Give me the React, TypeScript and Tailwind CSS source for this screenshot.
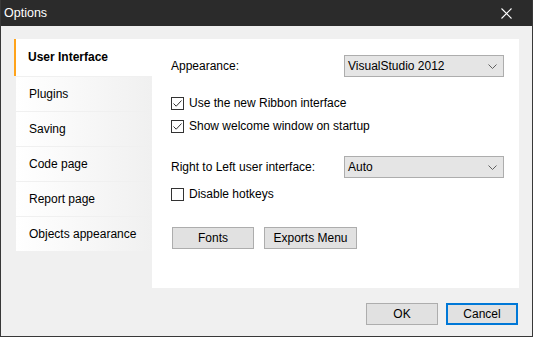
const navItems = ['Plugins', 'Saving', 'Code page', 'Report page', 'Objects appearance'];

function Check({ checked }: { checked: boolean }) {
	return (
		<span className="flex h-[13px] w-[13px] items-center justify-center border border-[#333333] bg-white">
			{checked && (
				<svg width="11" height="11" viewBox="0 0 11 11">
					<path d="M1.5 5.5 L4.2 8.2 L9.5 2.5" fill="none" stroke="#333333" strokeWidth="1" />
				</svg>
			)}
		</span>
	);
}

function Select({ value }: { value: string }) {
	return (
		<div className="flex h-[22px] w-[160px] items-center justify-between border border-[#adadad] bg-[#e5e5e5] pl-[3px] pr-[6px]">
			<span>{value}</span>
			<svg width="9" height="5" viewBox="0 0 9 5">
				<path d="M0.5 0.5 L4.5 4.5 L8.5 0.5" fill="none" stroke="#606060" strokeWidth="1" />
			</svg>
		</div>
	);
}

function Btn({ label, w, primary }: { label: string; w: string; primary?: boolean }) {
	return (
		<button
			type="button"
			className={`flex h-[22px] ${w} items-center justify-center bg-[#e1e1e1] ${
				primary ? 'border-2 border-[#0078d7]' : 'border border-[#adadad]'
			}`}
		>
			{label}
		</button>
	);
}

export default function App() {
	return (
		<div
			className="flex h-[337px] w-[533px] flex-col border border-t-0 border-[#383838] bg-[#f0f0f0] text-[12px] leading-[15px] text-black"
			style={{ fontFamily: '"Liberation Sans", Arial, sans-serif' }}
		>
			<div className="flex h-[26px] items-center justify-between bg-[#2b2b2b] pl-[3px] pr-[20px] text-white">
				<span className="text-[12.5px]">Options</span>
				<svg width="11" height="11" viewBox="0 0 11 11">
					<path d="M0.5 0.5 L10.5 10.5 M10.5 0.5 L0.5 10.5" stroke="white" strokeWidth="1.1" />
				</svg>
			</div>
			<div className="flex pl-[13px] pt-[13px]">
				<div className="flex w-[138px] flex-col gap-[1px]">
					<div className="flex h-[37px] items-center border-l-[2px] border-[#ffa31a] bg-white pl-[12px] font-bold">
						User Interface
					</div>
					{navItems.map((item) => (
						<div
							key={item}
							className="ml-[2px] flex h-[34px] items-center bg-gradient-to-r from-white to-[#f0f0f0] pl-[13px]"
						>
							{item}
						</div>
					))}
				</div>
				<div className="flex h-[249px] w-[367px] flex-col bg-white pl-[19px] pt-[16px]">
					<div className="flex items-center">
						<span className="w-[173px]">Appearance:</span>
						<Select value="VisualStudio 2012" />
					</div>
					<div className="mt-[19px] flex flex-col gap-[8px]">
						<label className="flex items-center gap-[5px]">
							<Check checked />
							Use the new Ribbon interface
						</label>
						<label className="flex items-center gap-[5px]">
							<Check checked />
							Show welcome window on startup
						</label>
					</div>
					<div className="mt-[22px] flex items-center">
						<span className="w-[173px]">Right to Left user interface:</span>
						<Select value="Auto" />
					</div>
					<label className="mt-[9px] flex items-center gap-[5px]">
						<Check checked={false} />
						Disable hotkeys
					</label>
					<div className="ml-[1px] mt-[25px] flex gap-[10px]">
						<Btn label="Fonts" w="w-[82px]" />
						<Btn label="Exports Menu" w="w-[93px]" />
					</div>
				</div>
			</div>
			<div className="flex justify-end gap-[8px] pr-[14px] pt-[15px]">
				<Btn label="OK" w="w-[72px]" />
				<Btn label="Cancel" w="w-[72px]" primary />
			</div>
		</div>
	);
}
